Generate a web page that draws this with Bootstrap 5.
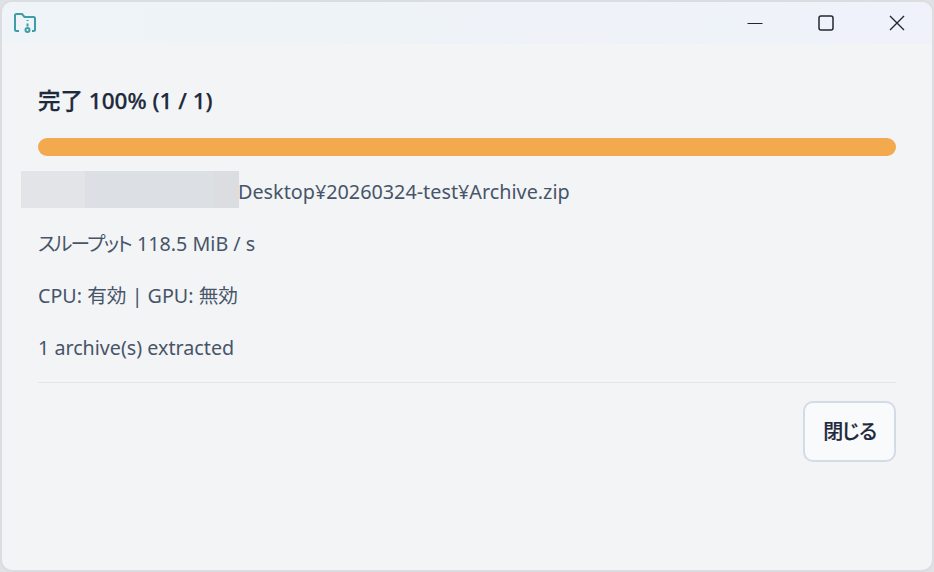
<!doctype html>
<html lang="ja">
<head>
<meta charset="utf-8">
<title>完了</title>
<link href="https://cdn.jsdelivr.net/npm/bootstrap@5.3.0/dist/css/bootstrap.min.css" rel="stylesheet">
<style>
html,body{height:100%;margin:0;background:#dfe1e5;}
body{font-family:"Noto Sans","Noto Sans CJK JP",sans-serif;font-feature-settings:"palt";}
.app-win{width:934px;height:572px;background:#f3f4f6;border:2px solid #dcdde0;border-radius:12px;overflow:hidden;}
.app-bar{height:42px;background:linear-gradient(90deg,#eef4f7,#eff2fa);}
.app-ico{margin-left:11px;}
.win-btn{width:71px;height:42px;}
.win-btn svg{display:block;}
.app-body{padding:39px 36px 0 36px;}
.app-head{font-size:22.500px;font-weight:500;line-height:36px;color:#1e293b;-webkit-text-stroke:.25px #1e293b;}
.app-prog{height:18px;margin-top:19px;background:#f3a94d;border-radius:9px;}
.info-line{font-size:19.700px;line-height:32px;color:#475569;margin-top:20px;}
.kana-tight{letter-spacing:-1.700px;margin-right:1px;}
.path-line{margin-top:15px;height:37px;}
.mask-a,.mask-b,.mask-c{height:37px;flex:none;}
.mask-a{width:64px;margin-left:-17px;background:#e3e4e7;}
.mask-b{width:128px;background:#dcdfe3;}
.mask-c{width:26px;background:#dcdde1;}
.path-txt{font-size:19.800px;line-height:42px;color:#475569;margin-left:-1px;}
.app-rule{height:1px;background:#e3e5e8;margin-top:18px;}
.close-wrap{margin-top:18px;}
.close-btn{width:93px;height:61px;padding:0;font-size:20px;font-weight:500;letter-spacing:-2.500px;color:#1e293b;-webkit-text-stroke:.2px #1e293b;background:#f9fafc;border:2px solid #d3dbe6;border-radius:10px;}
</style>
</head>
<body>
<div class="app-win">
  <div class="app-bar d-flex align-items-center justify-content-between">
    <svg class="app-ico" width="24" height="24" viewBox="0 0 24 24" fill="none" stroke="#3f9da6" stroke-width="2" aria-hidden="true"><path d="M6 20H3.500A1.500 1.500 0 0 1 2 18.500V4.500A1.500 1.500 0 0 1 3.500 3H9l2.500 3H20.500A1.500 1.500 0 0 1 22 7.500V18.500A1.500 1.500 0 0 1 20.500 20H19"/><path d="M14.500 9v1M14.500 12.500v3"/><circle cx="14.500" cy="19" r="2"/></svg>
    <div class="d-flex">
      <div class="win-btn d-flex align-items-center justify-content-center"><svg width="16" height="16" viewBox="0 0 16 16" stroke="#23272e" stroke-width="1"><path d="M0.500 8.500H15.500"/></svg></div>
      <div class="win-btn d-flex align-items-center justify-content-center"><svg width="16" height="16" viewBox="0 0 16 16" fill="none" stroke="#23272e" stroke-width="1.500"><rect x="1" y="1" width="14" height="14" rx="2"/></svg></div>
      <div class="win-btn d-flex align-items-center justify-content-center"><svg width="16" height="16" viewBox="0 0 16 16" stroke="#23272e" stroke-width="1.400"><path d="M1 1L15 15M15 1L1 15"/></svg></div>
    </div>
  </div>
  <div class="app-body">
    <div class="app-head">完了 100% (1 / 1)</div>
    <div class="app-prog"></div>
    <div class="path-line d-flex">
      <div class="mask-a"></div><div class="mask-b"></div><div class="mask-c"></div>
      <span class="path-txt">Desktop¥20260324-test¥Archive.zip</span>
    </div>
    <div class="info-line"><span class="kana-tight">スループット</span> 118.5 MiB / s</div>
    <div class="info-line">CPU: 有効 | GPU: 無効</div>
    <div class="info-line">1 archive(s) extracted</div>
    <div class="app-rule"></div>
    <div class="close-wrap d-flex justify-content-end">
      <button type="button" class="btn close-btn">閉じる</button>
    </div>
  </div>
</div>
<script src="https://cdn.jsdelivr.net/npm/bootstrap@5.3.0/dist/js/bootstrap.bundle.min.js"></script>
</body>
</html>
